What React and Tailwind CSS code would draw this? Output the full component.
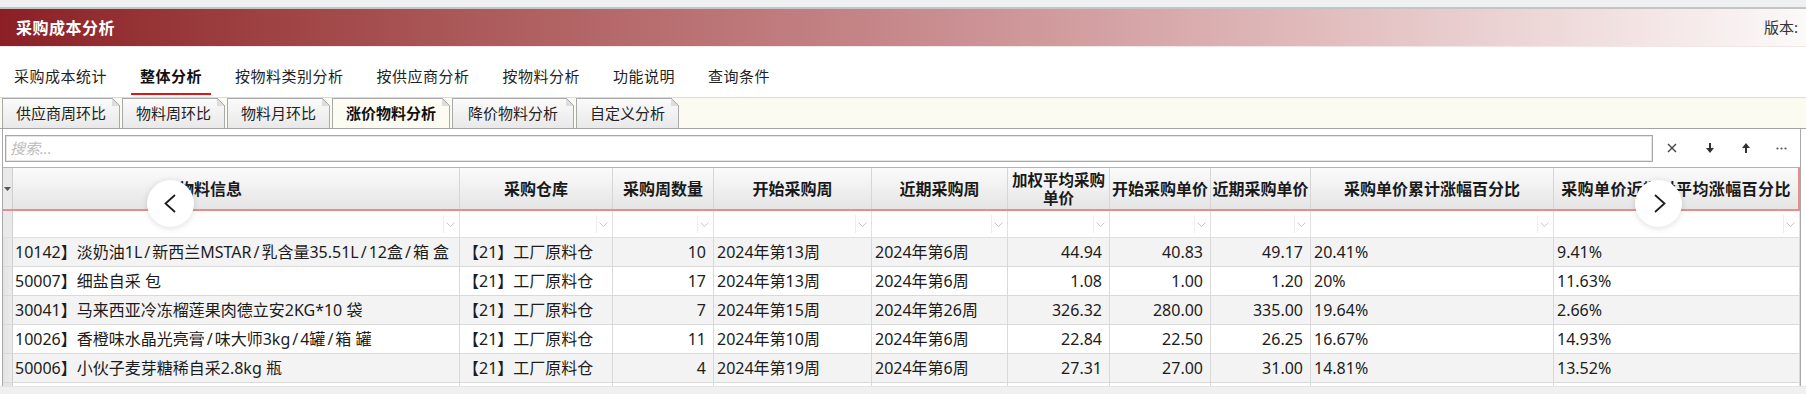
import React from "react";

const NAV = ["采购成本统计", "整体分析", "按物料类别分析", "按供应商分析", "按物料分析", "功能说明", "查询条件"];
const TABS = ["供应商周环比", "物料周环比", "物料月环比", "涨价物料分析", "降价物料分析", "自定义分析"];

// align: l = left, r = right
const ALIGN = ["l", "l", "r", "l", "l", "r", "r", "r", "l", "l"];

const ROWS = [
  ["10142】淡奶油1L/新西兰MSTAR/乳含量35.51L/12盒/箱 盒", "【21】工厂原料仓", "10", "2024年第13周", "2024年第6周", "44.94", "40.83", "49.17", "20.41%", "9.41%"],
  ["50007】细盐自采 包", "【21】工厂原料仓", "17", "2024年第13周", "2024年第6周", "1.08", "1.00", "1.20", "20%", "11.63%"],
  ["30041】马来西亚冷冻榴莲果肉德立安2KG*10 袋", "【21】工厂原料仓", "7", "2024年第15周", "2024年第26周", "326.32", "280.00", "335.00", "19.64%", "2.66%"],
  ["10026】香橙味水晶光亮膏/味大师3kg/4罐/箱 罐", "【21】工厂原料仓", "11", "2024年第10周", "2024年第6周", "22.84", "22.50", "26.25", "16.67%", "14.93%"],
  ["50006】小伙子麦芽糖稀自采2.8kg 瓶", "【21】工厂原料仓", "4", "2024年第19周", "2024年第6周", "27.31", "27.00", "31.00", "14.81%", "13.52%"],
];

// slashes in the material names render wider in the original grid font
function Name({ text }) {
  const parts = text.split("/");
  return (
    <>
      {parts.map((p, i) => (
        <React.Fragment key={i}>
          {i > 0 && <span className="mx-[2px]">/</span>}
          {p}
        </React.Fragment>
      ))}
    </>
  );
}

function Chevron({ dir }) {
  return (
    <svg width="12" height="19" viewBox="0 0 12 19" fill="none">
      <polyline
        points={dir === "left" ? "11,1 1.5,9.5 11,18" : "1,1 10.5,9.5 1,18"}
        stroke="#1c1c1c" strokeWidth="1.8" strokeLinejoin="miter"
      />
    </svg>
  );
}

function FilterArrow() {
  return (
    <div className="ml-auto mr-[2px] w-[14px] h-[18px] border-l border-[#eeeeee] flex items-center justify-center">
      <svg width="9" height="5" viewBox="0 0 9 5" fill="none">
        <polyline points="0.5,0.5 4.5,4.5 8.5,0.5" stroke="#c9c9c9" strokeWidth="1" />
      </svg>
    </div>
  );
}

function Tab({ label, active, wide }) {
  return (
    <div
      className={`relative h-[30px] flex items-center border border-b-0 border-[#a9a9a9] text-[15px] ${wide ? "px-[15px]" : "px-[13px]"} ${
        active ? "bg-[#fdfcf3] font-bold text-[#111]" : "bg-linear-to-b from-[#fafafa] to-[#e9e9e9] text-[#222]"
      }`}
    >
      {label}
      <svg className="absolute -top-px -right-px" width="8" height="8" viewBox="0 0 8 8">
        <polygon points="0,0 8,0 8,8" fill="#fcfbf2" />
        <polygon points="0,0 0,8 8,8" fill="#dddddd" />
        <line x1="0" y1="0" x2="8" y2="8" stroke="#a9a9a9" strokeWidth="1" />
      </svg>
    </div>
  );
}

export default function App() {
  return (
    <div className="relative w-[1806px] h-[394px] overflow-hidden bg-white font-['Noto_Sans','Noto_Sans_CJK_SC',sans-serif] text-[#1f1f1f]">
      {/* top strip */}
      <div className="h-[9px] bg-[#eef0f2] border-b-2 border-[#c4c4c4]" />

      {/* title bar */}
      <div className="h-[37px] flex items-center bg-linear-to-r from-[#8b1f25] via-[#c7898c] to-[#fcf9f9]">
        <span className="pl-[16px] text-[16px] font-bold text-white tracking-[0.5px]">采购成本分析</span>
        <span className="ml-auto pr-[8px] text-[15px] text-[#333]">版本:</span>
      </div>

      {/* nav */}
      <div className="h-[51px] flex pl-[14px] gap-[33px] border-t border-[#f2e6e6]">
        {NAV.map((n, i) => (
          <div key={n} className="flex flex-col">
            <span className={`mt-[19px] leading-[20px] text-[15px] tracking-[0.5px] ${i === 1 ? "font-bold text-[#111]" : "text-[#222]"}`}>{n}</span>
            {i === 1 && <div className="mt-[7px] h-[2px] -mx-[9px] bg-[#e41414]" />}
          </div>
        ))}
      </div>

      {/* tabs strip */}
      <div className="h-[32px] flex items-end gap-[2px] pl-[2px] bg-[#fcfbf2] border-t border-[#dadada] border-b border-b-[#a3a3a3]">
        {TABS.map((t, i) => (
          <Tab key={t} label={t} active={i === 3} wide={i === 4} />
        ))}
      </div>

      {/* panel */}
      <div className="ml-[2px] w-[1799px] border-x border-[#a8a8a8]">
        {/* search row */}
        <div className="h-[38px] flex items-center pl-[2px]">
          <div className="w-[1648px] h-[27px] mt-[1px] border border-[#a6a6a6] shadow-[inset_0_0_0_1px_#e6e6e6] bg-white flex items-center pl-[4px]">
            <span className="italic text-[15px] text-[#bdbdbd]">搜索...</span>
          </div>
          <div className="flex items-center">
            <div className="w-[38px] flex justify-center">
              <svg width="10" height="10" viewBox="0 0 10 10"><path d="M1 1 L9 9 M9 1 L1 9" stroke="#444" strokeWidth="1.4" /></svg>
            </div>
            <div className="w-[37px] flex justify-center">
              <svg width="8" height="10" viewBox="0 0 8 10"><path d="M3 0 H5 V5 H8 L4 10 L0 5 H3 Z" fill="#333" /></svg>
            </div>
            <div className="w-[36px] flex justify-center">
              <svg width="8" height="10" viewBox="0 0 8 10"><path d="M3 10 H5 V5 H8 L4 0 L0 5 H3 Z" fill="#333" /></svg>
            </div>
            <div className="w-[34px] flex justify-center">
              <svg width="11" height="3" viewBox="0 0 11 3"><circle cx="1.5" cy="1.5" r="1.1" fill="#555" /><circle cx="5.5" cy="1.5" r="1.1" fill="#555" /><circle cx="9.5" cy="1.5" r="1.1" fill="#555" /></svg>
            </div>
          </div>
        </div>

        {/* table */}
        <div className="border-t border-[#b3b3b3]">
          {/* header */}
          <div className="grid grid-cols-[10px_447px_153px_101px_158px_136px_102px_101px_100px_243px_246px] h-[43px] bg-linear-to-b from-[#fbfbfb] to-[#e5e5e5] border-b-2 border-[#e88c8c] text-[16px] font-bold text-[#1a1a1a] whitespace-nowrap">
            <div className="flex items-center justify-center border-r border-[#cfcfcf] bg-[#e9e9e9]">
              <svg width="7" height="4" viewBox="0 0 7 4"><polygon points="0,0 7,0 3.5,4" fill="#555" /></svg>
            </div>
            <div className="flex items-center justify-center pr-[52px] border-r border-[#d6d6d6]">物料信息</div>
            <div className="flex items-center justify-center border-r border-[#d6d6d6]">采购仓库</div>
            <div className="flex items-center justify-center border-r border-[#d6d6d6]">采购周数量</div>
            <div className="flex items-center justify-center border-r border-[#d6d6d6]">开始采购周</div>
            <div className="flex items-center justify-center border-r border-[#d6d6d6]">近期采购周</div>
            <div className="flex flex-col items-center justify-center text-[15.5px] border-r border-[#d6d6d6]">
              <span className="leading-[18px]">加权平均采购</span>
              <span className="leading-[18px]">单价</span>
            </div>
            <div className="flex items-center justify-center border-r border-[#d6d6d6]">开始采购单价</div>
            <div className="flex items-center justify-center border-r border-[#d6d6d6]">近期采购单价</div>
            <div className="flex items-center justify-center border-r border-[#d6d6d6]">采购单价累计涨幅百分比</div>
            <div className="flex items-center justify-center tracking-[0.4px] border-r-2 border-[#e88c8c]">采购单价近期对平均涨幅百分比</div>
          </div>

          {/* filter row */}
          <div className="grid grid-cols-[10px_447px_153px_101px_158px_136px_102px_101px_100px_243px_246px] h-[27px] border-b border-[#dedede]">
            <div className="bg-[#e9e9e9] border-r border-[#cfcfcf]" />
            {ALIGN.map((_, i) => (
              <div key={i} className="flex items-center border-r border-[#e2e2e2]">
                <FilterArrow />
              </div>
            ))}
          </div>

          {/* data rows */}
          {ROWS.map((row, r) => (
            <div
              key={r}
              className={`grid grid-cols-[10px_447px_153px_101px_158px_136px_102px_101px_100px_243px_246px] h-[29px] border-b border-[#d9d9d9] text-[16px] text-[#1c1c1c] whitespace-nowrap ${
                r % 2 === 0 ? "bg-[#f3f3f3]" : "bg-white"
              }`}
            >
              <div className="bg-linear-to-r from-[#e2e2e2] to-[#ececec] border-r border-[#cfcfcf]" />
              {row.map((cell, c) => (
                <div
                  key={c}
                  className={`flex items-center overflow-hidden border-r border-[#d9d9d9] ${
                    ALIGN[c] === "r" ? "justify-end pr-[7px]" : c === 0 ? "pl-[2px]" : "pl-[3px]"
                  }`}
                >
                  {c === 0 ? <span><Name text={cell} /></span> : cell}
                </div>
              ))}
            </div>
          ))}
          <div className="grid grid-cols-[10px_447px_153px_101px_158px_136px_102px_101px_100px_243px_246px] h-[3px]">
            <div className="bg-[#e5e5e5] border-r border-[#cfcfcf]" />
            {ALIGN.map((_, i) => (
              <div key={i} className="border-r border-[#d9d9d9]" />
            ))}
          </div>
        </div>
      </div>

      {/* bottom scroll area */}
      <div className="h-[20px] bg-[#f0f0f0] border-t border-[#e4e4e4]" />

      {/* scroll buttons */}
      <button className="absolute left-[147px] top-[180px] w-[47px] h-[47px] rounded-full bg-white shadow-[0_1px_6px_rgba(0,0,0,0.14)] flex items-center justify-center pr-[2px]">
        <Chevron dir="left" />
      </button>
      <button className="absolute left-[1635px] top-[180px] w-[47px] h-[47px] rounded-full bg-white shadow-[0_1px_6px_rgba(0,0,0,0.14)] flex items-center justify-center pl-[2px]">
        <Chevron dir="right" />
      </button>
    </div>
  );
}
